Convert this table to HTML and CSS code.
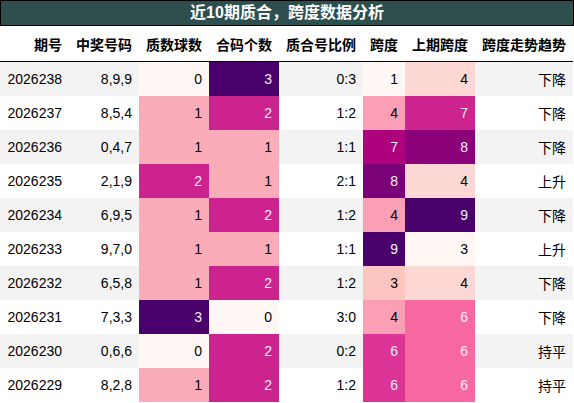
FILE: index.html
```html
<!DOCTYPE html>
<html lang="zh">
<head>
    <meta charset="UTF-8">
    <meta name="viewport" content="width=device-width, initial-scale=1.0">
    <title>近10期质合，跨度数据分析</title>
    <link rel="stylesheet" href="styles.css">
</head>
<body>

    <div class="report">
        <!-- Title bar -->
        <div class="report-title">近10期质合，跨度数据分析</div>

        <table class="stats">
            <colgroup>
                <col class="w-issue">
                <col class="w-nums">
                <col class="w-prime">
                <col class="w-comp">
                <col class="w-ratio">
                <col class="w-span">
                <col class="w-last">
                <col class="w-trend">
            </colgroup>
            <thead>
                <tr>
                    <th>期号</th>
                    <th>中奖号码</th>
                    <th>质数球数</th>
                    <th>合码个数</th>
                    <th>质合号比例</th>
                    <th>跨度</th>
                    <th>上期跨度</th>
                    <th>跨度走势趋势</th>
                </tr>
            </thead>
            <tbody>
                <tr>
                    <td>2026238</td><td>8,9,9</td>
                    <td class="q0">0</td><td class="q3">3</td>
                    <td>0:3</td>
                    <td class="s1">1</td><td class="l4">4</td>
                    <td>下降</td>
                </tr>
                <tr>
                    <td>2026237</td><td>8,5,4</td>
                    <td class="q1">1</td><td class="q2">2</td>
                    <td>1:2</td>
                    <td class="s4">4</td><td class="l7">7</td>
                    <td>下降</td>
                </tr>
                <tr>
                    <td>2026236</td><td>0,4,7</td>
                    <td class="q1">1</td><td class="q1">1</td>
                    <td>1:1</td>
                    <td class="s7">7</td><td class="l8">8</td>
                    <td>下降</td>
                </tr>
                <tr>
                    <td>2026235</td><td>2,1,9</td>
                    <td class="q2">2</td><td class="q1">1</td>
                    <td>2:1</td>
                    <td class="s8">8</td><td class="l4">4</td>
                    <td>上升</td>
                </tr>
                <tr>
                    <td>2026234</td><td>6,9,5</td>
                    <td class="q1">1</td><td class="q2">2</td>
                    <td>1:2</td>
                    <td class="s4">4</td><td class="l9">9</td>
                    <td>下降</td>
                </tr>
                <tr>
                    <td>2026233</td><td>9,7,0</td>
                    <td class="q1">1</td><td class="q1">1</td>
                    <td>1:1</td>
                    <td class="s9">9</td><td class="l3">3</td>
                    <td>上升</td>
                </tr>
                <tr>
                    <td>2026232</td><td>6,5,8</td>
                    <td class="q1">1</td><td class="q2">2</td>
                    <td>1:2</td>
                    <td class="s3">3</td><td class="l4">4</td>
                    <td>下降</td>
                </tr>
                <tr>
                    <td>2026231</td><td>7,3,3</td>
                    <td class="q3">3</td><td class="q0">0</td>
                    <td>3:0</td>
                    <td class="s4">4</td><td class="l6">6</td>
                    <td>下降</td>
                </tr>
                <tr>
                    <td>2026230</td><td>0,6,6</td>
                    <td class="q0">0</td><td class="q2">2</td>
                    <td>0:2</td>
                    <td class="s6">6</td><td class="l6">6</td>
                    <td>持平</td>
                </tr>
                <tr>
                    <td>2026229</td><td>8,2,8</td>
                    <td class="q1">1</td><td class="q2">2</td>
                    <td>1:2</td>
                    <td class="s6">6</td><td class="l6">6</td>
                    <td>持平</td>
                </tr>
            </tbody>
        </table>
    </div>

</body>
</html>
```

FILE: styles.css
```css
body {
    margin: 0;
    background: #ffffff;
    font-family: "Liberation Sans", "Noto Sans CJK SC", sans-serif;
    color: #000000;
}

.report {
    width: 574px;
}

/* Title bar */
.report-title {
    height: 26px;
    box-sizing: border-box;
    border: 1px solid #000000;
    background-color: #2f4f4f;
    color: #ffffff;
    font-size: 16px;
    font-weight: bold;
    line-height: 23px;
    text-align: center;
}

/* Table */
.stats {
    width: 573px;
    table-layout: fixed;
    border-collapse: collapse;
    font-size: 14px;
}

.w-issue { width: 69px; }
.w-nums  { width: 70px; }
.w-prime { width: 70px; }
.w-comp  { width: 70px; }
.w-ratio { width: 84px; }
.w-span  { width: 42px; }
.w-last  { width: 70px; }
.w-trend { width: 98px; }

.stats th,
.stats td {
    padding: 0 7px;
    text-align: right;
    white-space: nowrap;
}

.stats th {
    height: 35px;
    padding-top: 2px;
    font-weight: bold;
    border-bottom: 1px solid #000000;
    box-sizing: border-box;
}

.stats td {
    height: 34px;
}

.stats tbody tr:nth-child(odd) {
    background-color: #f3f3f3;
}

/* Count scale 0..3 */
.q0 { background-color: #fff7f3; }
.q1 { background-color: #fbacb9; }
.q2 { background-color: #cd238f; color: #f1f1f1; }
.q3 { background-color: #49006a; color: #f1f1f1; }

/* Span scale 1..9 */
.s1 { background-color: #fff7f3; }
.s3 { background-color: #fcc5c0; }
.s4 { background-color: #fa9fb5; }
.s6 { background-color: #dd3497; color: #f1f1f1; }
.s7 { background-color: #ae017e; color: #f1f1f1; }
.s8 { background-color: #7a0177; color: #f1f1f1; }
.s9 { background-color: #49006a; color: #f1f1f1; }

/* Previous span scale 3..9 */
.l3 { background-color: #fff7f3; }
.l4 { background-color: #fdd7d3; }
.l6 { background-color: #f768a1; color: #f1f1f1; }
.l7 { background-color: #cd238f; color: #f1f1f1; }
.l8 { background-color: #8b0179; color: #f1f1f1; }
.l9 { background-color: #49006a; color: #f1f1f1; }
```
